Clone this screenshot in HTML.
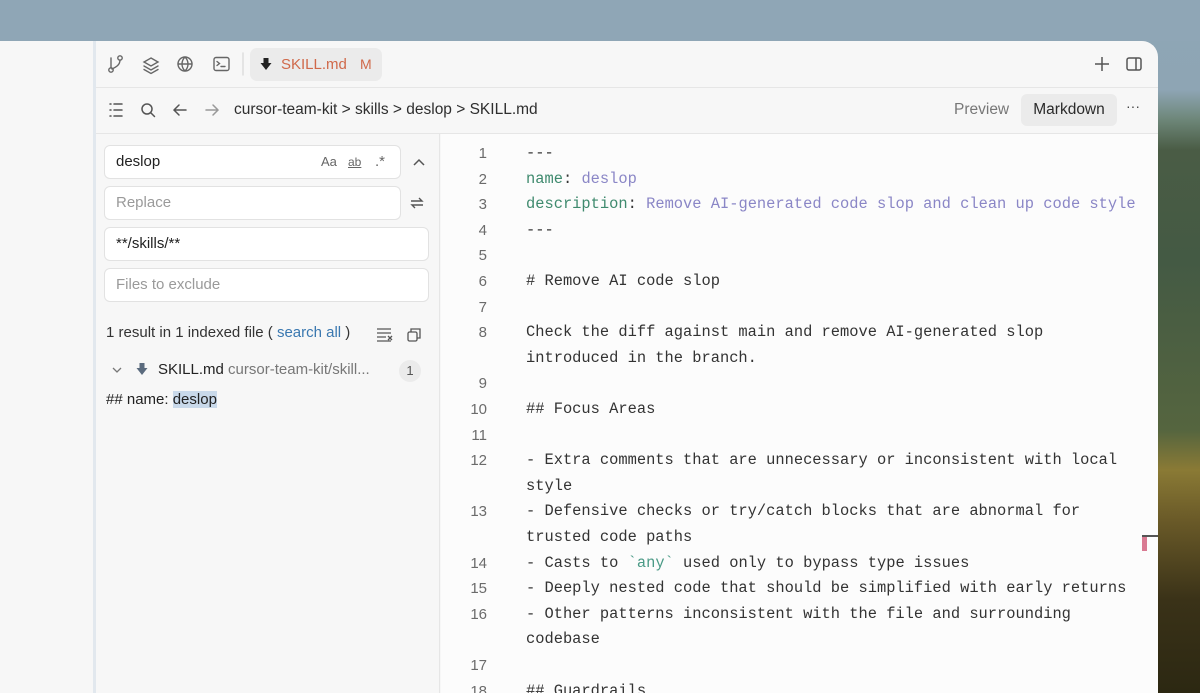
<!DOCTYPE html>
<html><head><meta charset="utf-8"><style>
*{margin:0;padding:0;box-sizing:border-box}
body{width:1200px;height:693px;overflow:hidden;position:relative;font-family:"Liberation Sans",sans-serif;
background:linear-gradient(180deg,#8fa6b6 0px,#8ea5b4 90px,#6d8678 120px,#4a5c45 150px,#445a44 260px,#55653f 430px,#8a7a35 470px,#6a5a28 520px,#3a3218 600px,#2c2812 693px);}
.top{position:absolute;left:0;top:0;width:1200px;height:41px;background:#8fa6b6}
.win{position:absolute;left:0;top:41px;width:1158px;height:652px;background:#f7f7f7;border-top-right-radius:16px;overflow:hidden}
.lstrip{position:absolute;left:93px;top:0;width:3px;height:652px;background:#e2e8ee}
.bar1{position:absolute;left:96px;top:0;right:0;height:47px;border-bottom:1px solid #e6e6e6}
.bar2{position:absolute;left:96px;top:47px;right:0;height:46px;border-bottom:1px solid #e6e6e6}
.side{position:absolute;left:96px;top:93px;width:344px;height:560px;border-right:1px solid #e6e6e6}
.ed{position:absolute;left:441px;top:93px;right:0;height:560px;background:#fcfcfc;overflow:hidden}
svg{position:absolute}
.tab{position:absolute;left:154px;top:7px;width:132px;height:33px;background:#ebebeb;border-radius:7px}
.tab span{position:absolute;top:8px;font-size:15px;color:#d0694a}
.inp{position:absolute;left:8px;height:34px;background:#fff;border:1px solid #e2e2e2;border-radius:6px;font-size:15px;padding-left:11px;line-height:32px;color:#222}
.ph{color:#9a9a9a}
.code{position:absolute;left:0;top:-40px;font-family:"Liberation Mono",monospace;font-size:15.4px;color:#333}
.r{position:absolute;height:25.6px;line-height:25.6px;white-space:pre}
.n{left:0;width:46px;text-align:right;color:#6b6b6b;font-family:"Liberation Sans",sans-serif;font-size:15px}
.t{left:85px}
.k{color:#3f8a6e}.v{color:#8a86c6}
</style></head><body>
<div class="top"></div>
<div class="win">
<div class="lstrip"></div>
<div class="bar1">
 <svg width="260" height="47" viewBox="0 0 260 47" fill="none" stroke="#666" stroke-width="1.4" stroke-linecap="round">
  <circle cx="15" cy="29" r="2.2"/><circle cx="24" cy="17" r="2.2"/><path d="M15 17v10M24 19c0 5-4 7-8 9"/>
  <path d="M55 17l7 4-7 4-7-4z M48 25l7 4 7-4 M48 28.5l7 4 7-4"/>
  <circle cx="89" cy="23" r="7"/><path d="M82 23h14M89 16c-4 4-4 10 0 14M89 16c4 4 4 10 0 14"/>
  <rect x="118" y="16.5" width="15" height="13" rx="2"/><path d="M121 20.5l2.5 2-2.5 2M125 25.5h4"/>
  <path d="M147 12v22" stroke="#ddd"/>
 </svg>
 <div class="tab"><svg width="14" height="14" style="left:9px;top:9px" viewBox="0 0 14 14"><path d="M4.5 1h5v5h3L7 13 1.5 6h3z" fill="#222"/></svg><span style="left:31px">SKILL.md</span><span style="left:110px;font-size:14px">M</span></div>
 <svg width="60" height="47" style="left:990px" viewBox="0 0 60 47" fill="none" stroke="#555" stroke-width="1.5"><path d="M16 16v14M9 23h14"/><rect x="41" y="17" width="14" height="12" rx="2"/><path d="M50 17v12"/></svg>
</div>
<div class="bar2">
 <svg width="130" height="46" viewBox="0 0 130 46" fill="none" stroke="#555" stroke-width="1.5" stroke-linecap="round">
  <path d="M14 16h1M14 22h1M14 28h1M18 16h8M18 22h8M18 28h8"/>
  <circle cx="51" cy="21" r="5"/><path d="M55 25l3.5 3.5"/>
  <path d="M78 22h12M83 17l-5 5 5 5"/>
  <path d="M110 22h12M117 17l5 5-5 5" stroke="#999"/>
 </svg>
 <div style="position:absolute;left:138px;top:13px;font-size:15.5px;color:#2e2e2e">cursor-team-kit &gt; skills &gt; deslop &gt; SKILL.md</div>
 <div style="position:absolute;left:858px;top:13px;font-size:15.5px;color:#777">Preview</div>
 <div style="position:absolute;left:925px;top:6px;width:96px;height:32px;background:#ebebeb;border-radius:6px;font-size:15.5px;color:#2a2a2a;text-align:center;line-height:32px">Markdown</div>
 <div style="position:absolute;left:1030px;top:10px;font-size:14px;color:#444">···</div>
</div>
<div class="side">
 <div class="inp" style="top:11px;width:297px">deslop<span style="position:absolute;left:216px;font-size:13px;color:#666">Aa</span><span style="position:absolute;left:243px;font-size:12px;color:#666;text-decoration:underline">ab</span><span style="position:absolute;left:270px;font-size:15px;color:#666">.*</span></div>
 <svg width="20" height="20" style="left:313px;top:18px" viewBox="0 0 20 20" fill="none" stroke="#555" stroke-width="1.5"><path d="M5 13l5-5 5 5"/></svg>
 <div class="inp ph" style="top:52px;width:297px">Replace</div>
 <svg width="20" height="20" style="left:311px;top:59px" viewBox="0 0 20 20" fill="none" stroke="#555" stroke-width="1.4"><path d="M4 8h11l-3-3M16 12H5l3 3"/></svg>
 <div class="inp" style="top:93px;width:325px">**/skills/**</div>
 <div class="inp ph" style="top:134px;width:325px">Files to exclude</div>
 <div style="position:absolute;left:10px;top:190px;font-size:15px;color:#333">1 result in 1 indexed file ( <span style="color:#3a78b0">search all</span> )</div>
 <svg width="50" height="20" style="left:278px;top:190px" viewBox="0 0 50 20" fill="none" stroke="#555" stroke-width="1.3"><path d="M3 5h14M3 9h14M3 13h9M3 17h14M14 12l4 4M18 12l-4 4"/><rect x="34" y="8" width="9" height="9" rx="1.5"/><path d="M37 8V5h9v9h-3"/></svg>
 <svg width="14" height="14" style="left:14px;top:229px" viewBox="0 0 14 14" fill="none" stroke="#777" stroke-width="1.3"><path d="M3 5l4 4 4-4"/></svg>
 <svg width="14" height="14" style="left:39px;top:228px" viewBox="0 0 14 14"><path d="M4.5 1h5v5h3L7 13 1.5 6h3z" fill="#5b6b7e"/></svg>
 <div style="position:absolute;left:62px;top:227px;font-size:15px;color:#222">SKILL.md <span style="color:#777">cursor-team-kit/skill...</span></div>
 <div style="position:absolute;left:303px;top:226px;width:22px;height:22px;border-radius:11px;background:#ebebeb;font-size:13px;color:#555;text-align:center;line-height:22px">1</div>
 <div style="position:absolute;left:10px;top:257px;font-size:15px;color:#222">## name: <span style="background:#c9d9ea">deslop</span></div>
</div>
<div class="ed"><div class="code">
<div class="r n" style="top:47px">1</div><div class="r t" style="top:47px">---</div>
<div class="r n" style="top:72.6px">2</div><div class="r t" style="top:72.6px"><span class="k">name</span>: <span class="v">deslop</span></div>
<div class="r n" style="top:98.2px">3</div><div class="r t" style="top:98.2px"><span class="k">description</span>: <span class="v">Remove AI-generated code slop and clean up code style</span></div>
<div class="r n" style="top:123.8px">4</div><div class="r t" style="top:123.8px">---</div>
<div class="r n" style="top:149.4px">5</div>
<div class="r n" style="top:175px">6</div><div class="r t" style="top:175px"># Remove AI code slop</div>
<div class="r n" style="top:200.6px">7</div>
<div class="r n" style="top:226.2px">8</div><div class="r t" style="top:226.2px">Check the diff against main and remove AI-generated slop</div>
<div class="r t" style="top:251.8px">introduced in the branch.</div>
<div class="r n" style="top:277.4px">9</div>
<div class="r n" style="top:303px">10</div><div class="r t" style="top:303px">## Focus Areas</div>
<div class="r n" style="top:328.6px">11</div>
<div class="r n" style="top:354.2px">12</div><div class="r t" style="top:354.2px">- Extra comments that are unnecessary or inconsistent with local</div>
<div class="r t" style="top:379.8px">style</div>
<div class="r n" style="top:405.4px">13</div><div class="r t" style="top:405.4px">- Defensive checks or try/catch blocks that are abnormal for</div>
<div class="r t" style="top:431px">trusted code paths</div>
<div class="r n" style="top:456.6px">14</div><div class="r t" style="top:456.6px">- Casts to <span style="color:#4a9a86">`any`</span> used only to bypass type issues</div>
<div class="r n" style="top:482.2px">15</div><div class="r t" style="top:482.2px">- Deeply nested code that should be simplified with early returns</div>
<div class="r n" style="top:507.8px">16</div><div class="r t" style="top:507.8px">- Other patterns inconsistent with the file and surrounding</div>
<div class="r t" style="top:533.4px">codebase</div>
<div class="r n" style="top:559px">17</div>
<div class="r n" style="top:584.6px">18</div><div class="r t" style="top:584.6px">## Guardrails</div>
</div>
<div style="position:absolute;left:701px;top:401px;width:17px;height:2px;background:#555"></div>
<div style="position:absolute;left:701px;top:403px;width:5px;height:14px;background:#d97a92"></div>
</div>
</div>
</body></html>
